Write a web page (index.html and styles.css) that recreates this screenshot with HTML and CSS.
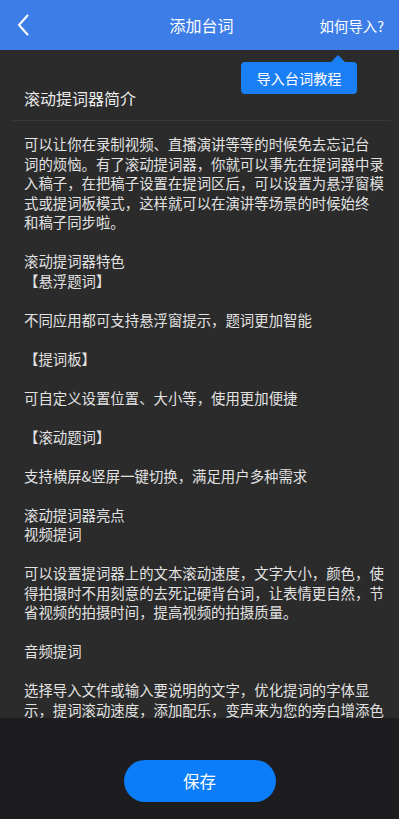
FILE: index.html
```html
<!DOCTYPE html>
<html lang="zh-CN">
<head>
    <meta charset="UTF-8">
    <meta name="viewport" content="width=device-width, initial-scale=1.0">
    <title>添加台词</title>
    <link rel="stylesheet" href="styles.css">
</head>
<body>

<div class="app">
    <header class="topbar">
        <span class="back">
            <svg width="12" height="22" viewBox="0 0 12 22"><path d="M10.5 1.5 L2 11 L10.5 20.5" fill="none" stroke="#fff" stroke-width="2" stroke-linecap="round" stroke-linejoin="round"/></svg>
        </span>
        <span class="title">添加台词</span>
        <span class="help">如何导入?</span>
    </header>

    <div class="tip">导入台词教程</div>

    <div class="content">
        <h2 class="section-title">滚动提词器简介</h2>
        <div class="divider"></div>
        <div class="intro">
            可以让你在录制视频、直播演讲等等的时候免去忘记台<br>
            词的烦恼。有了滚动提词器，你就可以事先在提词器中录<br>
            入稿子，在把稿子设置在提词区后，可以设置为悬浮窗模<br>
            式或提词板模式，这样就可以在演讲等场景的时候始终<br>
            和稿子同步啦。<br>
            <br>
            滚动提词器特色<br>
            【悬浮题词】<br>
            <br>
            不同应用都可支持悬浮窗提示，题词更加智能<br>
            <br>
            【提词板】<br>
            <br>
            可自定义设置位置、大小等，使用更加便捷<br>
            <br>
            【滚动题词】<br>
            <br>
            支持横屏&amp;竖屏一键切换，满足用户多种需求<br>
            <br>
            滚动提词器亮点<br>
            视频提词<br>
            <br>
            可以设置提词器上的文本滚动速度，文字大小，颜色，使<br>
            得拍摄时不用刻意的去死记硬背台词，让表情更自然，节<br>
            省视频的拍摄时间，提高视频的拍摄质量。<br>
            <br>
            音频提词<br>
            <br>
            选择导入文件或输入要说明的文字，优化提词的字体显<br>
            示，提词滚动速度，添加配乐，变声来为您的旁白增添色
        </div>
    </div>

    <footer class="bottom">
        <button class="save">保存</button>
    </footer>
</div>

</body>
</html>
```

FILE: styles.css
```css
body {
    margin: 0;
    font-family: "Noto Sans CJK SC", "Noto Sans", sans-serif;
    background-color: #2b2b2b;
}
.app {
    position: relative;
    height: 100vh;
    display: flex;
    flex-direction: column;
    overflow: hidden;
}
.topbar {
    height: 50px;
    flex-shrink: 0;
    background-color: #3c7de8;
    color: #ffffff;
    display: grid;
    grid-template-columns: 1fr auto 1fr;
    align-items: center;
}
.back {
    padding-left: 17px;
    display: flex;
    align-items: center;
}
.title {
    font-size: 16px;
    padding-left: 4px;
}
.help {
    justify-self: end;
    padding-right: 15px;
    font-size: 14.4px;
}
.tip {
    position: absolute;
    top: 62px;
    right: 42px;
    width: 116px;
    height: 32px;
    line-height: 32px;
    text-align: center;
    font-size: 14.2px;
    color: #ffffff;
    background-color: #1a7ef5;
    border-radius: 4px;
}
.tip::before {
    content: "";
    position: absolute;
    top: -7px;
    right: 12px;
    border-left: 7px solid transparent;
    border-right: 7px solid transparent;
    border-bottom: 7px solid #1a7ef5;
}
.content {
    flex: 1;
    overflow: hidden;
    background-color: #2b2b2b;
    padding-top: 36px;
}
.section-title {
    margin: 0 0 10px 24px;
    font-size: 16px;
    font-weight: normal;
    line-height: 24px;
    color: #ececec;
}
.divider {
    height: 1px;
    margin: 0 8px 0 13px;
    background-color: #3a3a3a;
}
.intro {
    margin-top: 13px;
    padding-left: 24px;
    font-size: 14.4px;
    line-height: 19.5px;
    color: #e2e2e2;
    white-space: nowrap;
}
.bottom {
    height: 101px;
    flex-shrink: 0;
    background-color: #1d1d1f;
    display: flex;
    justify-content: center;
    padding-top: 42px;
    box-sizing: border-box;
}
.save {
    width: 152px;
    height: 42px;
    border: none;
    border-radius: 21px;
    background-color: #0b7df8;
    color: #ffffff;
    font-family: inherit;
    font-size: 16.5px;
}
```
